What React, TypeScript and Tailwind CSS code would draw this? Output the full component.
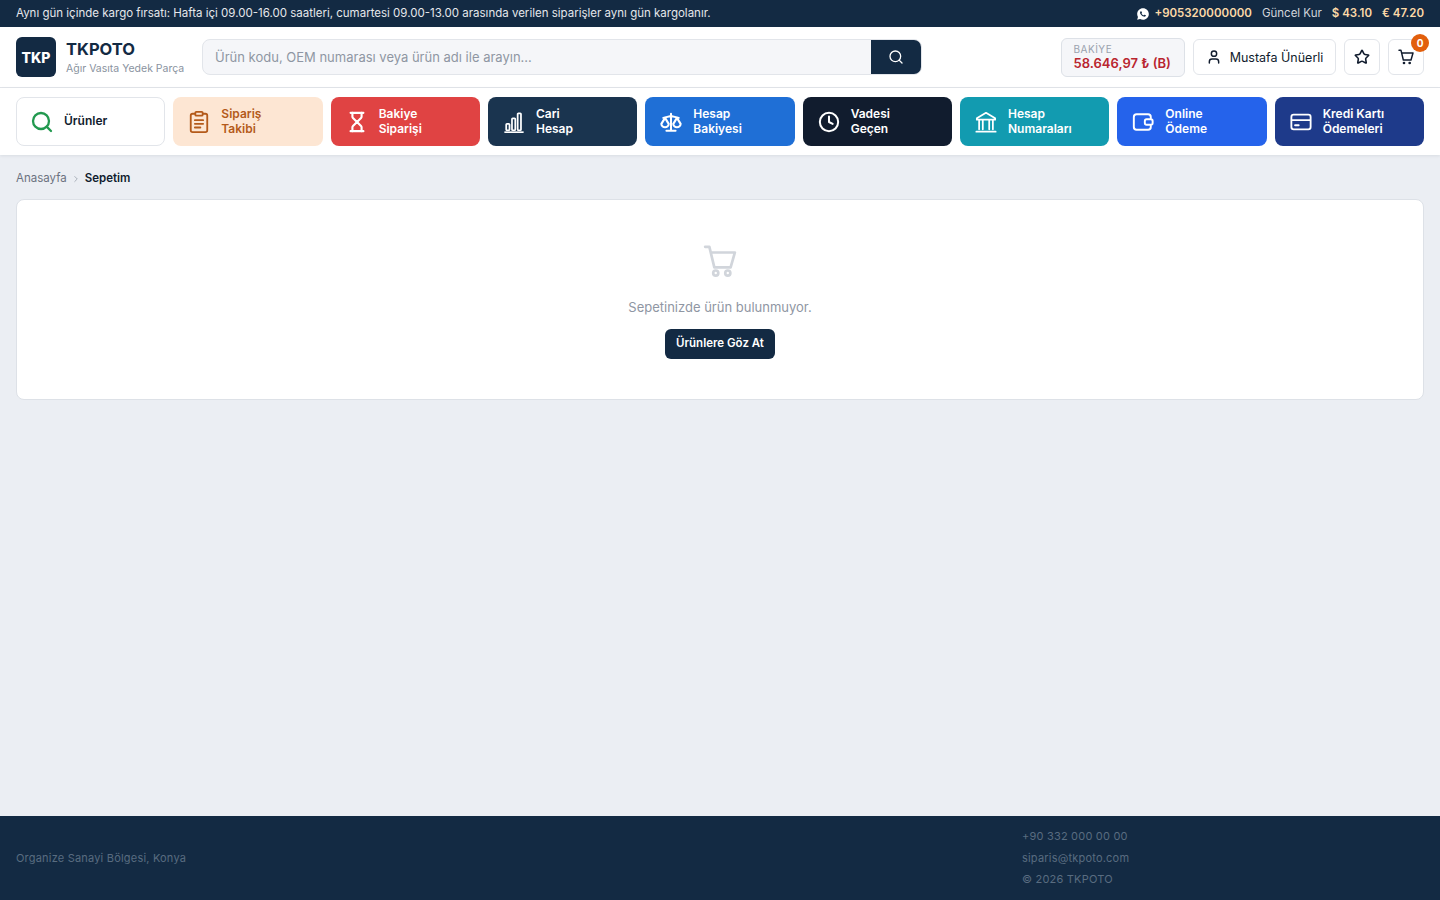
import React from "react";
import { Search, Hourglass, Clock, User, Star, ChevronRight } from "lucide-react";
import { RiWhatsappFill } from "react-icons/ri";

type P = { className?: string };
const base = { viewBox: "0 0 24 24", fill: "none", stroke: "currentColor", strokeWidth: 2, strokeLinecap: "round", strokeLinejoin: "round" } as const;

const Clipboard = ({ className }: P) => (
  <svg {...base} className={className} strokeWidth={2}>
    <rect x="3" y="3" width="18" height="20" rx="2" />
    <rect x="8" y="1" width="8" height="4" rx="1" fill="#fde6d3" />
    <path d="M7.500 10h9M7.500 14h9M7.500 18h6" />
  </svg>
);
const Hour = ({ className }: P) => <Hourglass className={className} strokeWidth={2.3} />;
const ClockI = ({ className }: P) => <Clock className={className} strokeWidth={2.2} />;
const Bars = ({ className }: P) => (
  <svg {...base} className={className} strokeWidth={1.9} strokeLinecap="butt">
    <rect x="3.500" y="14" width="3.600" height="7" rx="0.8" />
    <rect x="9.800" y="8" width="3.600" height="13" rx="0.8" />
    <rect x="16" y="2.500" width="3.600" height="18.500" rx="0.8" />
    <path d="M1.500 23.200h21" strokeWidth={2} />
  </svg>
);
const Scale = ({ className }: P) => (
  <svg {...base} className={className}>
    <path d="M12 3v18M7 21.500h10M3.500 7.500 12 5.500l8.500 2" strokeWidth={2.2} />
    <path d="M5.500 7.500 1.500 14a4 3.800 0 0 0 8 0Z" strokeWidth={2.3} />
    <path d="M18.500 7.500 14.500 14a4 3.800 0 0 0 8 0Z" strokeWidth={2.3} />
  </svg>
);
const Bank = ({ className }: P) => (
  <svg {...base} className={className} strokeWidth={1.9}>
    <path d="M12 2 2 8v1.500h20V8Z" />
    <path d="M4.500 10v10M8.500 10v10M15.500 10v10M19.500 10v10" />
    <path d="M1.500 22.500h21" strokeWidth={2} />
  </svg>
);
const WalletI = ({ className }: P) => (
  <svg {...base} className={className} strokeWidth={2.1}>
    <path d="M20.500 8V6.500a3 3 0 0 0-3-3H5a3 3 0 0 0-3 3v11a3 3 0 0 0 3 3h12.500a3 3 0 0 0 3-3V16" />
    <rect x="14" y="9" width="8.500" height="6" rx="2" />
  </svg>
);
const Card = ({ className }: P) => (
  <svg {...base} className={className} strokeWidth={2}>
    <rect x="1.500" y="4" width="21" height="16" rx="2.500" />
    <path d="M2 10h20M5.500 15.500h4" />
  </svg>
);
const Cart = ({ className, hollow, strokeWidth = 2.2 }: P & { hollow?: boolean; strokeWidth?: number }) => (
  <svg {...base} className={className} strokeWidth={strokeWidth}>
    <path d="M1.500 2H4.500L8 16.500H19.500L22.500 6H5.500" />
    {hollow ? (
      <>
        <circle cx="9" cy="20.500" r="1.800" />
        <circle cx="17.500" cy="20.500" r="1.800" />
      </>
    ) : (
      <>
        <circle cx="9" cy="21" r="2" fill="currentColor" stroke="none" />
        <circle cx="17.500" cy="21" r="2" fill="currentColor" stroke="none" />
      </>
    )}
  </svg>
);

const items = [
  { l: ["Sipariş", "Takibi"], I: Clipboard, c: "bg-[#fde6d3] text-[#b45a1a]" },
  { l: ["Bakiye", "Siparişi"], I: Hour, c: "bg-[#e04343] text-white" },
  { l: ["Cari", "Hesap"], I: Bars, c: "bg-[#1a344f] text-white" },
  { l: ["Hesap", "Bakiyesi"], I: Scale, c: "bg-[#1f6fd6] text-white" },
  { l: ["Vadesi", "Geçen"], I: ClockI, c: "bg-[#111c2e] text-white" },
  { l: ["Hesap", "Numaraları"], I: Bank, c: "bg-[#129bb0] text-white" },
  { l: ["Online", "Ödeme"], I: WalletI, c: "bg-[#2563eb] text-white" },
  { l: ["Kredi Kartı", "Ödemeleri"], I: Card, c: "bg-[#1e3a8a] text-white" },
];

export default function App() {
  return (
    <div className="min-h-screen flex flex-col bg-[#ebeef3] font-['Inter',sans-serif] text-[#111c2e]">
      <div className="h-[27px] shrink-0 bg-[#132a43] px-4 flex items-center justify-between text-[11.5px] text-[#e5e7eb]">
        <span>Aynı gün içinde kargo fırsatı: Hafta içi 09.00-16.00 saatleri, cumartesi 09.00-13.00 arasında verilen siparişler aynı gün kargolanır.</span>
        <div className="flex items-center gap-[10px]">
          <span className="flex items-center gap-[4px] font-semibold text-[#fcd9a8]">
            <RiWhatsappFill className="w-[14px] h-[14px] text-white mt-[1px]" />
            +905320000000
          </span>
          <span className="text-[#d1d5db]">Güncel Kur</span>
          <span className="font-semibold text-[#fcd9a8]">$ 43.10</span>
          <span className="font-semibold text-[#fcd9a8]">€ 47.20</span>
        </div>
      </div>

      <header className="h-[61px] shrink-0 bg-white border-b border-[#e2e5ea] px-4 flex items-center">
        <div className="w-10 h-10 rounded-md bg-[#132a43] text-white flex items-center justify-center text-[14px] font-extrabold">TKP</div>
        <div className="ml-[10px] w-[136px]">
          <div className="text-[16.5px] leading-[20px] font-bold text-[#132a43]">TKPOTO</div>
          <div className="text-[10.5px] leading-[14px] mt-[3px] text-[#8a93a0]">Ağır Vasıta Yedek Parça</div>
        </div>
        <div className="w-[720px] h-[36px] flex rounded-lg border border-[#e2e5ea] bg-[#f5f6f9] overflow-hidden">
          <div className="flex-1 flex items-center pl-3 pt-[1px] text-[13px] text-[#8f96a3]">Ürün kodu, OEM numarası veya ürün adı ile arayın...</div>
          <div className="w-[50px] bg-[#132a43] flex items-center justify-center text-white">
            <Search className="w-4 h-4" />
          </div>
        </div>
        <div className="ml-auto flex items-center gap-2">
          <div className="h-[39px] w-[124px] rounded-md border border-[#dde1e7] bg-[#f5f6f9] pl-[11.5px] flex flex-col justify-center">
            <div className="text-[10px] leading-[12px] tracking-[0.5px] text-[#9aa2ae]">BAKİYE</div>
            <div className="text-[13px] leading-[16px] font-semibold text-[#b9252f]">58.646,97 ₺ (B)</div>
          </div>
          <div className="h-[36px] w-[143px] rounded-md border border-[#e2e5ea] bg-white flex items-center justify-center gap-[8px] text-[12.5px]">
            <User className="w-[16px] h-[16px]" strokeWidth={2.2} />
            <span className="pt-[2px]">Mustafa Ünüerli</span>
          </div>
          <div className="h-[36px] w-[36px] rounded-md border border-[#e2e5ea] bg-white flex items-center justify-center">
            <Star className="w-[16px] h-[16px]" strokeWidth={2.4} />
          </div>
          <div className="relative h-[36px] w-[36px] rounded-md border border-[#e2e5ea] bg-white flex items-center justify-center">
            <Cart className="w-[16px] h-[16px]" />
            <span className="absolute -top-[6px] -right-[6px] w-[18px] h-[18px] rounded-full bg-[#e25f0c] text-white text-[10px] font-bold flex items-center justify-center">0</span>
          </div>
        </div>
      </header>

      <nav className="h-[67px] shrink-0 bg-white px-4 py-[9px] grid grid-cols-9 gap-2 shadow-[0_1px_3px_rgba(15,23,42,0.08)]">
        <div className="rounded-lg border border-[#e2e5ea] bg-white flex items-center pl-[13px] gap-[10px] text-[12px] font-semibold">
          <Search className="w-[24px] h-[24px] text-[#22994f] mt-[1px]" strokeWidth={2.3} />
          <span className="-mt-[2px]">Ürünler</span>
        </div>
        {items.map(({ l, I, c }) => (
          <div key={l[0] + l[1]} className={`rounded-lg flex items-center pl-[15px] gap-[11px] text-[12px] leading-[15px] font-semibold ${c}`}>
            <I className="w-[22px] h-[22px] shrink-0" />
            <div className="-mt-[2px]">
              <div>{l[0]}</div>
              <div>{l[1]}</div>
            </div>
          </div>
        ))}
      </nav>

      <main className="flex-1 px-4">
        <div className="h-[44px] pt-[4px] flex items-center gap-[4px] text-[11.5px] text-[#6b7280]">
          <span>Anasayfa</span>
          <ChevronRight className="w-[10px] h-[10px] text-[#9ca3af]" />
          <span className="font-semibold text-[#111c2e]">Sepetim</span>
        </div>
        <div className="h-[201px] rounded-lg border border-[#dde1e7] bg-white flex flex-col items-center pt-[44px]">
          <Cart className="w-[34px] h-[34px] text-[#d1d5db]" hollow strokeWidth={1.9} />
          <div className="mt-[20px] text-[13px] leading-[18px] text-[#8f96a3]">Sepetinizde ürün bulunmuyor.</div>
          <div className="mt-[13px] h-[30px] w-[110px] rounded-md bg-[#132a43] text-white text-[11.5px] font-semibold flex items-center justify-center pb-[1px]">Ürünlere Göz At</div>
        </div>
      </main>

      <footer className="h-[84px] shrink-0 bg-[#132a43] px-4 flex items-center text-[11px] tracking-[0.2px] text-[#596c80]">
        <span className="w-[1006px] pt-[1px]">Organize Sanayi Bölgesi, Konya</span>
        <div className="flex flex-col gap-[7px] leading-[14.5px]">
          <span>+90 332 000 00 00</span>
          <span>siparis@tkpoto.com</span>
          <span>© 2026 TKPOTO</span>
        </div>
      </footer>
    </div>
  );
}
